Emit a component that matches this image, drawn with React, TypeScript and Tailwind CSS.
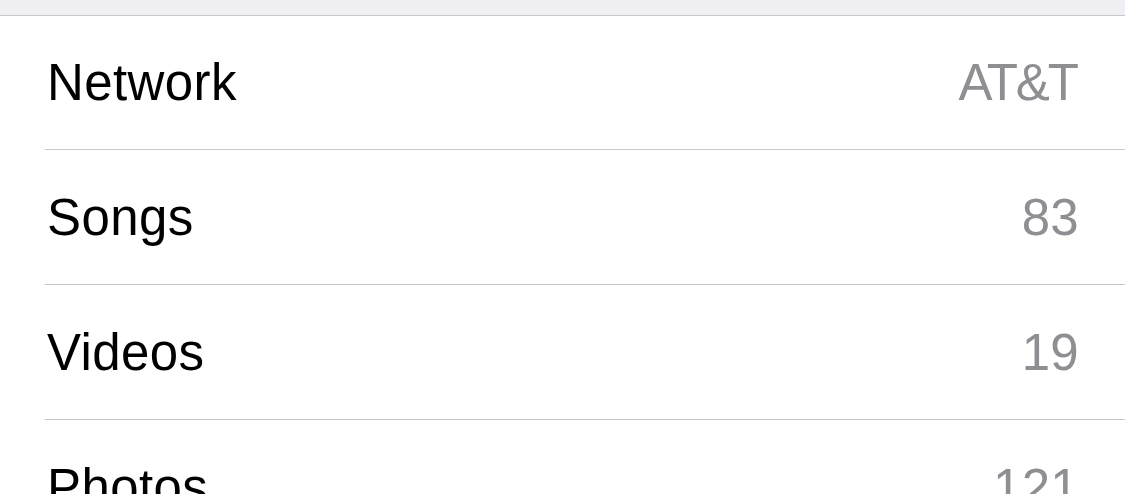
import React from "react";

const rows = [
  { label: "Network", value: "AT&T", tight: true },
  { label: "Songs", value: "83", tight: false },
  { label: "Videos", value: "19", tight: false },
  { label: "Photos", value: "121", tight: false },
];

export default function App() {
  return (
    <div
      className="w-[1125px] h-[494px] overflow-hidden bg-white"
      style={{ fontFamily: '"Liberation Sans", Arial, sans-serif' }}
    >
      <div className="h-[16px] bg-[#efeff4] border-b border-[#c8c7cc]" />
      <div className="flex flex-col">
        {rows.map((r, i) => (
          <div key={r.label} className="pl-[45px]">
            <div
              className={
                (i === 0 ? "h-[134px] " : "h-[135px] ") +
                "flex items-center justify-between pl-[2px] pr-[46px] border-b border-[#c8c7cc] box-border"
              }
            >
              <span className="text-[51px] text-black leading-none tracking-[0.4px]">{r.label}</span>
              <span
                className={
                  r.tight
                    ? "text-[51px] text-[#8e8e93] leading-none tracking-[-2px] pr-[2px]"
                    : "text-[51px] text-[#8e8e93] leading-none tracking-[0.3px]"
                }
              >
                {r.value}
              </span>
            </div>
          </div>
        ))}
      </div>
    </div>
  );
}
